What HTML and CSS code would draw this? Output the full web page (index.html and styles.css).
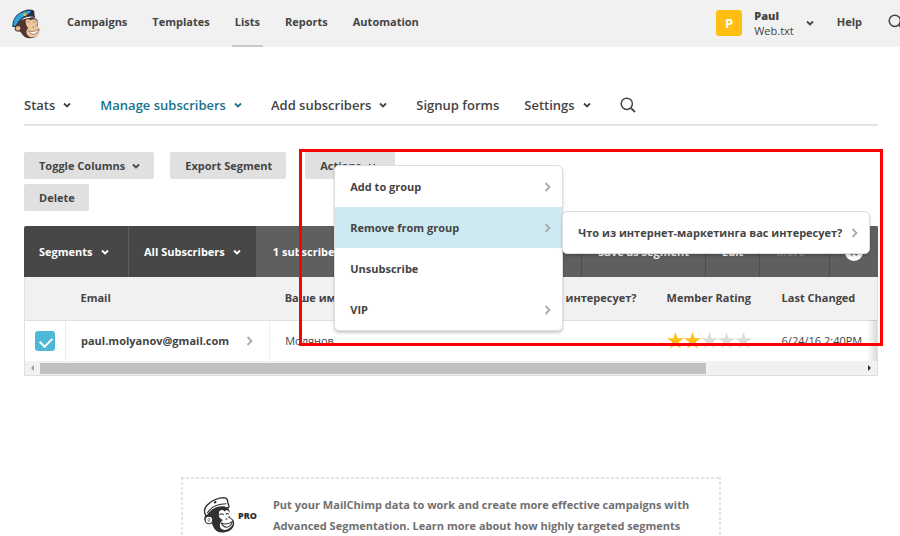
FILE: index.html
```html
<!DOCTYPE html>
<html lang="en">
<head>
  <meta charset="UTF-8">
  <meta name="viewport" content="width=device-width, initial-scale=1.0">
  <title>Lists</title>
  <link rel="stylesheet" href="styles.css">
</head>
<body>
  <svg class="sprite" aria-hidden="true">
    <symbol id="down" viewBox="0 0 8 8"><path d="M1 2.5 4 5.5 7 2.5" fill="none" stroke="currentColor" stroke-width="1.8"/></symbol>
    <symbol id="right" viewBox="0 0 8 10"><path d="M1.5 1 5.5 5 1.5 9" fill="none" stroke="currentColor" stroke-width="1.8"/></symbol>
    <symbol id="search" viewBox="0 0 16 16"><circle cx="6.8" cy="6.8" r="5.6" fill="none" stroke="currentColor" stroke-width="1.5"/><path d="M10.8 10.8 15 15" stroke="currentColor" stroke-width="1.8"/></symbol>
    <symbol id="star" viewBox="0 0 17 17"><path d="M8.5 0 10.6 6.2H17L11.8 10.1 13.8 16.4 8.5 12.6 3.2 16.4 5.2 10.1 0 6.2H6.4Z" fill="currentColor"/></symbol>
  </svg>

  <header class="topbar">
    <a class="logo" href="#" aria-label="Home">
      <svg width="30" height="30" viewBox="0 0 90 90">
        <path d="M18 36 Q10 48 14 62 Q24 66 28 72 Q36 88 53 88 Q70 88 79 76 L76 32 L62 24 L28 32Z" fill="#503530"/>
        <path d="M41 33 Q50 28 56 34 Q64 28 73 33 Q77 41 74 49 Q86 56 84 65 Q81 81 64 85 Q48 86 43 71 Q42 62 49 57 Q40 50 41 33Z" fill="#edc7a0"/>
        <circle cx="18" cy="58" r="10" fill="#503530"/>
        <circle cx="18" cy="58" r="7" fill="#e5b88d"/>
        <path d="M1 54 Q0 25 22 12 Q44 -3 63 3 Q69 7 67 16 L70 27 Q60 20 44 24 Q20 31 12 54Z" fill="#28323f"/>
        <path d="M4 46 Q5 24 25 13 Q44 3 58 6 L50 15 Q24 24 12 48 L7 53Z" fill="#2ca4de"/>
        <path d="m38 10 3 4 5 0-4 4 1 4-5-2-4 3 1-5-4-3 5-1z" fill="#eabb3e"/>
        <path d="M44 40 Q49 36 54 41 M62 40 Q67 36 71 40" fill="none" stroke="#a87858" stroke-width="2"/>
        <path d="M49 65 Q64 72 81 60 Q78 73 66 76 Q55 77 49 65Z" fill="#fff" stroke="#785142" stroke-width="2"/>
        <path d="M61 54 l5 1 m4-2 3-2" stroke="#785142" stroke-width="2"/>
      </svg>
    </a>
    <nav class="main-nav">
      <a href="#">Campaigns</a>
      <a href="#">Templates</a>
      <a class="current" href="#">Lists</a>
      <a href="#">Reports</a>
      <a href="#">Automation</a>
    </nav>
    <div class="account">
      <span class="avatar">P</span>
      <div class="user"><b>Paul</b><span>Web.txt</span></div>
      <svg class="down"><use href="#down"/></svg>
    </div>
    <a class="help" href="#">Help</a>
    <button class="top-search" aria-label="Search"><svg class="search"><use href="#search"/></svg></button>
  </header>

  <main class="content">
    <nav class="sub-nav">
      <a href="#">Stats <svg class="down"><use href="#down"/></svg></a>
      <a class="current" href="#">Manage subscribers <svg class="down"><use href="#down"/></svg></a>
      <a href="#">Add subscribers <svg class="down"><use href="#down"/></svg></a>
      <a href="#">Signup forms</a>
      <a href="#">Settings <svg class="down"><use href="#down"/></svg></a>
      <a href="#" aria-label="Search subscribers"><svg class="search"><use href="#search"/></svg></a>
    </nav>

    <div class="actions">
      <div class="action-row">
        <button class="btn">Toggle Columns <svg class="down"><use href="#down"/></svg></button>
        <button class="btn">Export Segment</button>
        <div class="dropdown">
          <button class="btn">Actions <svg class="down"><use href="#down"/></svg></button>
          <ul class="menu">
            <li><button>Add to group <svg class="right"><use href="#right"/></svg></button></li>
            <li class="open">
              <button>Remove from group <svg class="right"><use href="#right"/></svg></button>
              <ul class="menu submenu">
                <li><button>Что из интернет-маркетинга вас интересует? <svg class="right"><use href="#right"/></svg></button></li>
              </ul>
            </li>
            <li><button>Unsubscribe</button></li>
            <li><button>VIP <svg class="right"><use href="#right"/></svg></button></li>
          </ul>
        </div>
      </div>
      <div class="action-row">
        <button class="btn">Delete</button>
      </div>
    </div>

    <section class="subscribers">
      <div class="segment-bar">
        <button>Segments <svg class="down"><use href="#down"/></svg></button>
        <button>All Subscribers <svg class="down"><use href="#down"/></svg></button>
        <div class="segment-info">
          <span class="count">1 subscriber selected</span>
          <button>Save as segment</button>
          <button>Edit</button>
          <button class="disabled">More</button>
          <button class="close" aria-label="Close"><svg width="20" height="20" viewBox="0 0 20 20"><circle cx="10" cy="10" r="9" fill="#fff"/><path d="m7 7 6 6m0-6-6 6" stroke="#5f5f5f" stroke-width="2"/></svg></button>
        </div>
      </div>
      <div class="table-wrap">
        <table>
          <thead>
            <tr>
              <th class="pick"></th>
              <th class="email">Email</th>
              <th>Ваше имя</th>
              <th>Что из интернет-маркетинга вас интересует?</th>
              <th>Member Rating</th>
              <th>Last Changed</th>
            </tr>
          </thead>
          <tbody>
            <tr>
              <td class="pick"><input type="checkbox" aria-label="Select paul.molyanov@gmail.com" checked></td>
              <td class="email"><a href="#">paul.molyanov@gmail.com <svg class="right"><use href="#right"/></svg></a></td>
              <td>Молянов</td>
              <td></td>
              <td>
                <div class="stars">
                  <svg class="on"><use href="#star"/></svg><svg class="on"><use href="#star"/></svg><svg><use href="#star"/></svg><svg><use href="#star"/></svg><svg><use href="#star"/></svg>
                </div>
              </td>
              <td>6/24/16 2:40PM</td>
            </tr>
          </tbody>
        </table>
      </div>
      <div class="scrollbar">
        <svg class="arrow dim" viewBox="0 0 15 13"><path d="M9 3v6L6 6z" fill="currentColor"/></svg>
        <div class="track"><div class="thumb"></div></div>
        <svg class="arrow" viewBox="0 0 15 13"><path d="M6 3v6l3-3z" fill="currentColor"/></svg>
      </div>
    </section>

    <aside class="promo">
      <div class="pro">
        <svg width="32" height="36" viewBox="0 0 93 105">
          <path d="M14 42 Q23 29 48 24 L73 31 L78 42 Q72 50 79 60 Q91 66 91 78 Q88 99 64 103 Q38 107 29 85 L25 76 Q10 81 4 67 Q1 57 14 42Z" fill="#303030"/>
          <path d="M5 48 Q1 30 20 17 Q35 4 61 2 Q73 4 72 16 L76 28 Q73 35 61 29 Q35 26 17 48 L11 57Z" fill="#fff" stroke="#303030" stroke-width="4"/>
          <path d="M12 47 Q27 21 68 20" fill="none" stroke="#303030" stroke-width="3"/>
          <path d="M31 14 38 10 39 17 33 20Z" fill="#303030"/>
          <circle cx="17" cy="67" r="11" fill="#fff" stroke="#303030" stroke-width="3"/>
          <path d="M13 66q4-7 8 0l-5 3 2 4" fill="none" stroke="#303030" stroke-width="2"/>
          <path d="M47 42 Q55 34 63 42 Q69 35 76 43 Q80 52 73 59 Q90 67 87 78 Q81 93 64 96 Q48 96 49 81 Q48 74 58 67 Q46 63 46 52Z" fill="#fff"/>
          <path d="M48 52q6-6 12 0M66 51q4-5 9-1M65 64h6M53 76q16 7 33-5-4 15-17 17-11 0-16-12Z" fill="none" stroke="#303030" stroke-width="3"/>
        </svg>
        <b>PRO</b>
      </div>
      <p>Put your MailChimp data to work and create more effective campaigns with Advanced Segmentation. Learn more about how highly targeted segments</p>
    </aside>
  </main>

  <div class="highlight"></div>
</body>
</html>
```
FILE: styles.css
```css
* {
  margin: 0;
  padding: 0;
  box-sizing: border-box;
}

body {
  position: relative;
  height: 100vh;
  overflow: hidden;
  font: 700 11px/16px "Open Sans", sans-serif;
  color: #444;
  background: #fff;
}

a {
  color: inherit;
  text-decoration: none;
}

button {
  font: inherit;
  color: inherit;
  background: none;
  border: none;
  cursor: pointer;
}

ul {
  list-style: none;
}

svg {
  flex: none;
}

.sprite {
  position: absolute;
  width: 0;
  height: 0;
}

.down {
  width: 8px;
  height: 8px;
}

.right {
  width: 8px;
  height: 10px;
  color: #aaa;
}

.search {
  width: 16px;
  height: 16px;
}

/* top bar */
.topbar {
  display: flex;
  align-items: center;
  height: 47px;
  padding-left: 12px;
  background: #f1f1f1;
}

.logo {
  display: flex;
}

.main-nav {
  display: flex;
  gap: 19px;
  height: 100%;
  margin-left: 22px;
}

.main-nav a {
  padding: 14px 3px 0;
}

.main-nav .current {
  border-bottom: 2px solid #c8c8c8;
}

.account {
  display: flex;
  align-items: center;
  gap: 12px;
  margin-left: auto;
  padding-bottom: 2px;
}

.avatar {
  width: 26px;
  height: 26px;
  border-radius: 3px;
  background: #febe12;
  color: #fff;
  font-size: 13px;
  line-height: 26px;
  text-align: center;
}

.user {
  display: flex;
  flex-direction: column;
  line-height: 15px;
}

.user span {
  font-weight: 400;
}

.help {
  margin-left: 23px;
  padding-bottom: 3px;
}

.top-search {
  display: flex;
  margin: 0 -4px 0 26px;
  padding-bottom: 4px;
}

/* list navigation */
.content {
  padding: 45px 22px 0 24px;
}

.sub-nav {
  display: flex;
  align-items: center;
  gap: 25px;
  height: 34px;
  padding-bottom: 6px;
  border-bottom: 2px solid #e4e4e4;
  font-size: 13px;
  font-weight: 600;
}

.sub-nav a {
  display: flex;
  align-items: center;
  gap: 8px;
}

.sub-nav .down {
  margin-right: 4px;
}

.sub-nav .current {
  color: #17738c;
}

/* buttons over the table */
.actions {
  display: flex;
  flex-direction: column;
  gap: 5px;
  padding: 26px 0 15px;
}

.action-row {
  display: flex;
  gap: 16px;
}

.btn {
  display: flex;
  align-items: center;
  gap: 7px;
  height: 27px;
  padding: 0 14px 0 15px;
  border-radius: 2px;
  background: #e0e0e0;
}

.dropdown {
  position: relative;
  margin-left: 3px;
}

.dropdown .btn {
  padding-right: 19px;
}

.menu {
  position: absolute;
  top: 13px;
  left: 29px;
  z-index: 2;
  width: 229px;
  border: 1px solid #dedede;
  border-radius: 5px;
  background: #fff;
  box-shadow: 0 2px 3px rgba(0, 0, 0, 0.2);
}

.menu li {
  position: relative;
}

.menu button {
  display: flex;
  align-items: center;
  justify-content: space-between;
  width: 100%;
  height: 41px;
  padding: 0 10px 0 15px;
  white-space: nowrap;
}

.menu .open > button {
  background: #cdeaf2;
}

.submenu {
  top: 4px;
  left: 100%;
  width: 308px;
}

/* segment bar */
.segment-bar {
  display: flex;
  height: 51px;
  border-radius: 2px 2px 0 0;
  background: #474747;
  color: #fff;
  overflow: hidden;
}

.segment-bar button {
  display: flex;
  align-items: center;
  gap: 8px;
  padding: 0 15px;
  white-space: nowrap;
}

.segment-bar > button {
  min-width: 105px;
  border-right: 1px solid #5f5f5f;
}

.segment-info {
  display: flex;
  flex: 1;
  background: #5f5f5f;
}

.segment-info button {
  padding: 0 16px;
  border-left: 1px solid #4c4c4c;
}

.count {
  flex: 1;
  padding-left: 16px;
  line-height: 51px;
}

.segment-info .disabled {
  padding-right: 24px;
  color: #8a8a8a;
}

.segment-info .close {
  padding: 0 14px;
}

/* subscriber table */
.subscribers {
  border-bottom: 1px solid #ddd;
}

.table-wrap {
  position: relative;
  overflow: hidden;
  border: solid #e0e0e0;
  border-width: 0 1px;
}

.table-wrap::after {
  content: "";
  position: absolute;
  right: 0;
  bottom: 0;
  width: 10px;
  height: 41px;
  background: linear-gradient(to right, transparent, rgba(0, 0, 0, 0.15));
}

table {
  min-width: 100%;
  border-collapse: collapse;
  white-space: nowrap;
}

th,
td {
  height: 41px;
  padding: 0 15px;
  text-align: left;
  font-weight: 400;
}

th {
  height: 43px;
  border-bottom: 1px solid #e0e0e0;
  background: #f1f1f1;
  font-weight: 700;
}

td.pick,
td.email {
  border-right: 1px solid #eee;
}

.pick {
  padding: 0 10px;
}

.email a {
  display: flex;
  align-items: center;
  gap: 17px;
  font-weight: 700;
}

input[type="checkbox"] {
  display: block;
  appearance: none;
  width: 20px;
  height: 20px;
  border-radius: 3px;
  background: #4fb8d6;
}

input[type="checkbox"]:checked::before {
  content: "";
  display: block;
  width: 10px;
  height: 6px;
  margin: 6px 5px;
  border: solid #fff;
  border-width: 0 0 2px 2px;
  transform: rotate(-45deg);
}

.stars {
  display: flex;
  color: #ddd;
}

.stars svg {
  width: 17px;
  height: 17px;
}

.stars .on {
  color: #febe12;
}

.scrollbar {
  display: flex;
  align-items: center;
  height: 14px;
  border: solid #e0e0e0;
  border-width: 0 1px;
  background: #f1f1f1;
}

.arrow {
  width: 15px;
  height: 13px;
  color: #333;
}

.arrow.dim {
  color: #999;
}

.track {
  flex: 1;
}

.thumb {
  width: 81%;
  height: 11px;
  background: #c1c1c1;
}

/* promo */
.promo {
  display: flex;
  gap: 16px;
  max-width: 540px;
  min-height: 90px;
  margin: 101px auto 0;
  padding: 17px 22px;
  background:
    repeating-linear-gradient(to right, #e4e4e4 0 3px, transparent 3px 5px) top / 100% 2px no-repeat,
    repeating-linear-gradient(to bottom, #e4e4e4 0 3px, transparent 3px 5px) left / 2px 100% no-repeat,
    repeating-linear-gradient(to bottom, #e4e4e4 0 3px, transparent 3px 5px) right / 2px 100% no-repeat;
  color: #707070;
  line-height: 21px;
}

.pro {
  display: flex;
  align-items: center;
  gap: 3px;
  height: 42px;
  color: #303030;
  font-size: 9px;
}

/* frame round the open menus */
.highlight {
  position: absolute;
  top: 149px;
  right: 17px;
  left: 299px;
  z-index: 3;
  height: 197px;
  border: 3px solid #f00;
  pointer-events: none;
}
```
